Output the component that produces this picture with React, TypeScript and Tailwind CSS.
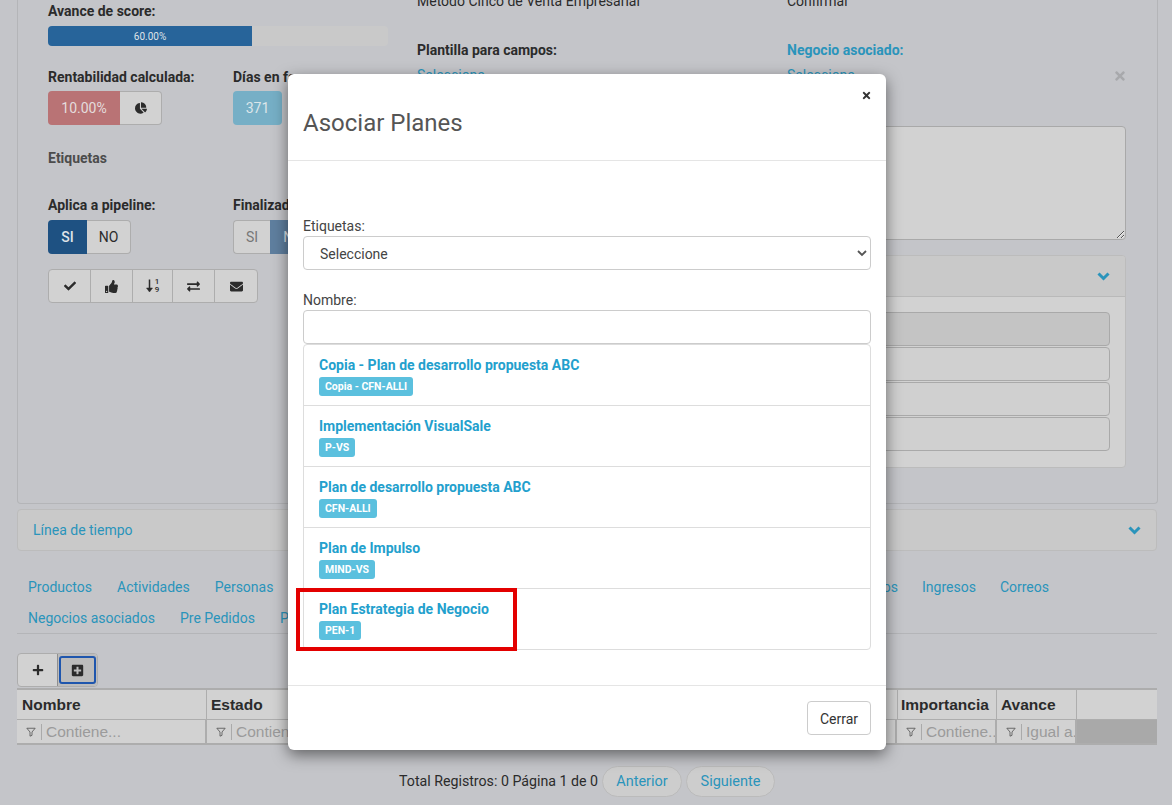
import {
  FaChartPie,
  FaCheck,
  FaEnvelope,
  FaExchangeAlt,
  FaPlus,
  FaPlusSquare,
  FaThumbsUp,
  FaTimes,
} from "react-icons/fa";

const plans = [
  { name: "Copia - Plan de desarrollo propuesta ABC", code: "Copia - CFN-ALLI" },
  { name: "Implementación VisualSale", code: "P-VS" },
  { name: "Plan de desarrollo propuesta ABC", code: "CFN-ALLI" },
  { name: "Plan de Impulso", code: "MIND-VS" },
  { name: "Plan Estrategia de Negocio", code: "PEN-1" },
];

function SortNumeric() {
  return (
    <div className="flex items-center gap-[2px]">
      <svg viewBox="0 0 7 13" className="h-[14px] w-[7px] fill-none stroke-[#2b2b2b]">
        <path d="M3.5 0v11" strokeWidth="1.5" />
        <path d="M0.5 8.5L3.5 12.5l3-4z" fill="#2b2b2b" strokeWidth="0.5" />
      </svg>
      <div className="flex flex-col text-center text-[8px] font-medium leading-[8px] text-[#2b2b2b]">
        <span>1</span>
        <span>9</span>
      </div>
    </div>
  );
}

const actions = [
  { icon: <FaCheck className="text-[12px]" />, w: "w-[42px]" },
  { icon: <FaThumbsUp className="text-[13px]" />, w: "w-[42px]" },
  { icon: <SortNumeric />, w: "w-[40px]" },
  { icon: <FaExchangeAlt className="text-[13px]" />, w: "w-[42px]" },
  { icon: <FaEnvelope className="text-[13px]" />, w: "w-[42px]" },
];

function Chevron() {
  return (
    <svg viewBox="0 0 13 9" className="h-[9px] w-[13px] fill-none stroke-[#2a94bb]">
      <path d="M1.5 1.5l5 5 5-5" strokeWidth="3" />
    </svg>
  );
}

function Funnel() {
  return (
    <svg viewBox="0 0 12 12" className="h-[10px] w-[10px] shrink-0 fill-none stroke-[#555]">
      <path d="M1 1.5h10L7.2 6v4L4.8 11V6z" strokeWidth="1" />
    </svg>
  );
}

function FilterCell({ text, className }: { text: string; className: string }) {
  return (
    <div className={`flex h-[23px] items-center overflow-hidden border-r-2 border-[#adadad] pl-[9px] ${className}`}>
      <Funnel />
      <span className="ml-[5px] mr-[4px] h-[16px] w-px shrink-0 bg-[#aaa]" />
      <span className="whitespace-nowrap text-[15.5px] text-[#9b9b9b]">{text}</span>
    </div>
  );
}

function FilaFija({ dark }: { dark?: boolean }) {
  return <div className={`h-[34px] rounded-[4px] border border-[#a9a9a9] ${dark ? "bg-[#c4c4c4]" : "bg-[#d0d0d0]"}`} />;
}

export default function App() {
  return (
    <div className="relative h-[805px] w-[1172px] overflow-hidden bg-[#c4c5c9] font-['Roboto',sans-serif] text-[14px] text-[#2b2b2b]">
      {/* ficha de fondo */}
      <div className="mx-[17px] -mt-[9px] h-[513px] w-[1141px] rounded-b-[4px] border border-t-0 border-[#b4b5b8] pl-[30px]">
        <div className="flex">
          <div className="w-[369px] pt-[12px]">
            <div className="h-[17px] font-bold leading-[17px]">Avance de score:</div>
            <div className="mt-[6px] flex h-[20px] w-[340px] overflow-hidden rounded-[4px] bg-[#c9c9c9]">
              <div className="flex w-[60%] items-center justify-center bg-[#27649a] text-[10px] text-[#dfe3e8]">60.00%</div>
            </div>

            <div className="mt-[23px] flex">
              <div className="w-[185px]">
                <div className="font-bold leading-[17px]">Rentabilidad calculada:</div>
                <div className="mt-[5px] flex h-[34px] w-[114px]">
                  <div className="flex w-[72px] items-center justify-center rounded-l-[4px] bg-[#b97375] text-[14px] text-[#e4dcdc]">10.00%</div>
                  <div className="flex flex-1 items-center justify-center rounded-r-[4px] border border-l-0 border-[#adadad] bg-[#d2d2d2]">
                    <FaChartPie className="text-[12px] text-[#2b2b2b]" />
                  </div>
                </div>
              </div>
              <div>
                <div className="font-bold leading-[17px]">Días en fase:</div>
                <div className="mt-[5px] flex h-[34px] w-[49px] items-center justify-center rounded-[4px] bg-[#76afc6] text-[#dce6ea]">371</div>
              </div>
            </div>

            <div className="mt-[25px] font-bold leading-[17px] text-[#4c4c4c]">Etiquetas</div>

            <div className="mt-[30px] flex">
              <div className="w-[185px]">
                <div className="font-bold leading-[17px]">Aplica a pipeline:</div>
                <div className="mt-[6px] flex h-[34px] w-[83px]">
                  <div className="flex w-[39px] items-center justify-center rounded-l-[4px] bg-[#1e5182] font-medium text-[#dfe3e8]">SI</div>
                  <div className="flex flex-1 items-center justify-center rounded-r-[4px] border border-l-0 border-[#adadad] bg-[#d2d2d2]">NO</div>
                </div>
              </div>
              <div>
                <div className="font-bold leading-[17px]">Finalizado:</div>
                <div className="mt-[6px] flex h-[34px] w-[83px]">
                  <div className="flex w-[37px] items-center justify-center rounded-l-[4px] border border-r-0 border-[#adadad] bg-[#d2d2d2] text-[#777]">SI</div>
                  <div className="flex flex-1 items-center justify-center rounded-r-[4px] bg-[#5f7f9f] text-[#dfe3e8]">NO</div>
                </div>
              </div>
            </div>

            <div className="mt-[15px] flex h-[34px] w-[210px] overflow-hidden rounded-[4px] border border-[#adadad] bg-[#d2d2d2]">
              {actions.map((a, i) => (
                <div key={i} className={`flex items-center justify-center border-r border-[#adadad] last:border-r-0 ${a.w}`}>
                  {a.icon}
                </div>
              ))}
            </div>
          </div>

          <div className="w-[709px] pt-[2px]">
            <div className="flex h-[17px] leading-[17px]">
              <div className="w-[370px]">Método Cinco de Venta Empresarial</div>
              <div>Confirmar</div>
            </div>
            <div className="mt-[32px] flex font-bold leading-[17px]">
              <div className="w-[370px]">Plantilla para campos:</div>
              <div className="text-[#2a94bb]">Negocio asociado:</div>
            </div>
            <div className="relative mt-[8px] flex leading-[17px] text-[#2a94bb]">
              <div className="w-[370px]">Seleccione</div>
              <div>Seleccione</div>
              <FaTimes className="absolute right-[-1px] top-[2px] text-[14px] text-[#a8a9ac]" />
            </div>

            <textarea className="mt-[42px] block h-[114px] w-full rounded-[4px] border border-[#a9a9a9] bg-[#d2d2d2]" />

            <div className="mt-[15px] h-[213px] overflow-hidden rounded-[4px] border border-[#bcbcbc] bg-[#d2d2d2]">
              <div className="flex h-[41px] items-center justify-end border-b border-[#b9b9b9] bg-[#c9c9c9] pr-[15px]">
                <Chevron />
              </div>
              <div className="flex flex-col gap-[1px] px-[15px] pt-[15px]">
                <FilaFija dark />
                <FilaFija />
                <FilaFija />
                <FilaFija />
              </div>
            </div>
          </div>
        </div>
      </div>

      <div className="mx-[17px] mt-[5px] flex h-[42px] w-[1140px] items-center justify-between rounded-[4px] border border-[#bcbcbc] bg-[#c9c9c9] pl-[15px] pr-[15px] text-[#2a94bb]">
        <span>Línea de tiempo</span>
        <Chevron />
      </div>

      {/* pestañas */}
      <div className="mx-[17px] mt-[21px] h-[62px] w-[1140px] border-b border-[#b4b5b8] pl-[11px] leading-[31px] text-[#2a94bb]">
        <div className="flex h-[31px]">
          <div className="flex gap-[25px]">
            <span>Productos</span>
            <span>Actividades</span>
            <span>Personas</span>
          </div>
          <div className="ml-auto flex gap-[24px] pr-[108px]">
            <span>Contratos</span>
            <span>Ingresos</span>
            <span>Correos</span>
          </div>
        </div>
        <div className="flex h-[31px] gap-[25px]">
          <span>Negocios asociados</span>
          <span>Pre Pedidos</span>
          <span>Pagos</span>
        </div>
      </div>

      {/* tabla */}
      <div className="ml-[17px] mt-[19px] flex h-[34px] w-[81px] rounded-[4px] border border-[#adadad] bg-[#d2d2d2]">
        <div className="flex w-[39px] items-center justify-center">
          <FaPlus className="text-[12px] text-[#2b2b2b]" />
        </div>
        <div className="flex-1 rounded-r-[4px] border-l border-[#8f8f8f] bg-[#bcbcbc] px-[1px] py-[2px]">
          <div className="flex h-full items-center justify-center rounded-[3px] border-2 border-[#1f56ad]">
            <FaPlusSquare className="text-[13px] text-[#2b2b2b]" />
          </div>
        </div>
      </div>
      <div className="mx-[17px] mt-[1px] w-[1140px] border-y-2 border-[#adadad] font-['Liberation_Sans',sans-serif] text-[15.5px]">
        <div className="flex h-[30px] items-center border-b border-[#adadad] bg-[#d2d2d2] font-bold text-[#2b2b2b]">
          <div className="flex h-full w-[190px] items-center border-r border-[#adadad] pl-[5px]">Nombre</div>
          <div className="flex h-full flex-1 items-center pl-[4px]">Estado</div>
          <div className="flex h-full w-[100px] items-center border-x border-[#adadad] pl-[3px]">Importancia</div>
          <div className="flex h-full w-[80px] items-center border-r border-[#adadad] pl-[4px]">Avance</div>
          <div className="h-full w-[80px]" />
        </div>
        <div className="flex bg-[#d2d2d2]">
          <FilterCell text="Contiene..." className="w-[190px]" />
          <FilterCell text="Contiene..." className="flex-1" />
          <FilterCell text="Contiene..." className="w-[100px]" />
          <FilterCell text="Igual a..." className="w-[80px]" />
          <div className="w-[80px] bg-[#a9a9a9]" />
        </div>
      </div>

      <div className="mt-[21px] flex items-center justify-center gap-[4px] pl-[2px]">
        <span className="text-[14.2px]">Total Registros: 0 Página 1 de 0</span>
        <span className="flex h-[31px] w-[80px] items-center justify-center rounded-full border border-[#bbb] bg-[#cdcdcd] text-[14.5px] text-[#2a94bb]">Anterior</span>
        <span className="flex h-[31px] w-[89px] items-center justify-center rounded-full border border-[#bbb] bg-[#cdcdcd] text-[14.5px] text-[#2a94bb]">Siguiente</span>
      </div>

      {/* modal */}
      <div className="absolute left-[288px] top-[74px] flex h-[676px] w-[598px] flex-col rounded-[6px] bg-white text-[#333] shadow-[0_5px_15px_rgba(0,0,0,0.5)]">
        <div className="relative h-[87px] shrink-0 border-b border-[#e5e5e5] pl-[15px] pt-[32px]">
          <h4 className="text-[24px] leading-[34px] text-[#555]">Asociar Planes</h4>
          <FaTimes className="absolute right-[14px] top-[16px] text-[11px] text-[#333]" />
        </div>
        <div className="flex-1 px-[15px] pt-[57px]">
          <div className="leading-[17px] text-[#444]">Etiquetas:</div>
          <div className="relative mt-[1px]">
            <select className="h-[34px] w-full appearance-none rounded-[4px] border border-[#ccc] bg-white pl-[16px] pt-[2px] text-[14px] text-[#444]">
              <option>Seleccione</option>
            </select>
            <svg viewBox="0 0 10 7" className="absolute right-[4px] top-[14px] h-[7px] w-[10px] fill-none stroke-[#555]">
              <path d="M1 1l4 4 4-4" strokeWidth="1.8" />
            </svg>
          </div>
          <div className="mt-[22px] leading-[17px] text-[#444]">Nombre:</div>
          <input className="mt-[1px] block h-[34px] w-full rounded-[4px] border border-[#ccc] bg-white" />
          <div className="rounded-[4px] border border-[#ddd]">
            {plans.map((p) => (
              <div key={p.code} className="h-[61px] border-b border-[#ddd] pl-[15px] pt-[12px] last:h-[60px] last:border-b-0">
                <div className="font-bold leading-[17px] text-[#23a0cd]">{p.name}</div>
                <div className="mt-[3px] w-fit rounded-[3px] bg-[#5bc0de] px-[6px] text-[10.5px] font-bold leading-[19px] text-white">{p.code}</div>
              </div>
            ))}
          </div>
        </div>
        <div className="flex h-[65px] shrink-0 items-start justify-end border-t border-[#e5e5e5] pr-[15px] pt-[15px]">
          <span className="flex h-[34px] w-[64px] items-center justify-center rounded-[4px] border border-[#ccc] bg-white pt-[2px]">Cerrar</span>
        </div>
      </div>

      {/* marca roja */}
      <div className="absolute left-[296px] top-[588px] h-[63px] w-[221px] border-[4px] border-[#e30000]" />
    </div>
  );
}
